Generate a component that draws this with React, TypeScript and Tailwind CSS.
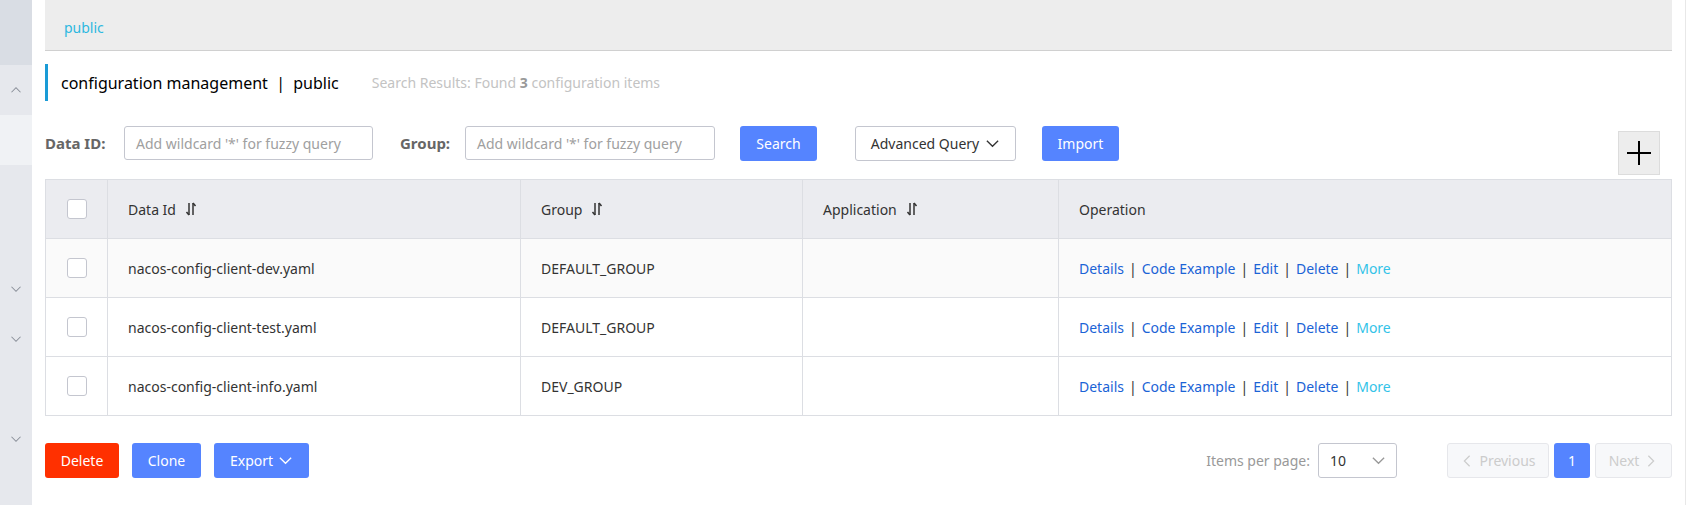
import React from 'react';

// 细箭头图标
function Chevron({ dir = 'down', className = '' }: { dir?: 'down' | 'up' | 'left' | 'right'; className?: string }) {
  const pts: Record<string, string> = {
    down: '2,5 8,11 14,5',
    up: '2,11 8,5 14,11',
    left: '11,2 5,8 11,14',
    right: '5,2 11,8 5,14',
  };
  return (
    <svg viewBox="0 0 16 16" className={className} fill="none" stroke="currentColor" strokeWidth="1.4">
      <polyline points={pts[dir]} />
    </svg>
  );
}

function SortIcon() {
  return (
    <svg viewBox="0 0 12 16" className="w-[12px] h-[16px] ml-[9px] text-[#333]" fill="none" stroke="currentColor" strokeWidth="1.5">
      <line x1="4" y1="2" x2="4" y2="14" />
      <polyline points="1.5,11 4,14" />
      <line x1="8" y1="2" x2="8" y2="14" />
      <polyline points="8,2 10.5,5" />
    </svg>
  );
}

const rows = [
  { id: 'nacos-config-client-dev.yaml', group: 'DEFAULT_GROUP' },
  { id: 'nacos-config-client-test.yaml', group: 'DEFAULT_GROUP' },
  { id: 'nacos-config-client-info.yaml', group: 'DEV_GROUP' },
];

function Checkbox() {
  return <div className="w-[20px] h-[20px] rounded-[3px] border border-[#c4c6cf] bg-white mx-auto" />;
}

function Sidebar() {
  return (
    <div className="w-[32px] shrink-0 flex flex-col text-[#8a8f99]">
      <div className="h-[65px] bg-[#d9dde4]" />
      <div className="h-[50px] bg-[#e6e8ed] flex items-center justify-center">
        <Chevron dir="up" className="w-[12px] h-[12px]" />
      </div>
      <div className="h-[50px] bg-[#f0f2f5]" />
      <div className="flex-1 bg-[#e6e8ed] flex flex-col items-center">
        <Chevron className="w-[12px] h-[12px] mt-[118px]" />
        <Chevron className="w-[12px] h-[12px] mt-[38px]" />
        <Chevron className="w-[12px] h-[12px] mt-[88px]" />
      </div>
    </div>
  );
}

export default function App() {
  const cell = 'border border-[#dcdee3] px-[20px] text-left font-normal';
  const sep = <span className="mx-[5px] text-[#333]">|</span>;
  return (
    <div
      className="flex w-[1686px] h-[505px] bg-white text-[14px] text-[#333] overflow-hidden"
      style={{ fontFamily: '"Noto Sans", "Liberation Sans", sans-serif' }}
    >
      <Sidebar />
      <div className="flex-1 pl-[13px] pr-[13px] border-r border-[#e8e8e8] flex flex-col">
        {/* 顶部命名空间 */}
        <div className="h-[51px] bg-[#ededed] border-b border-[#d0d0d0] pl-[19px] pt-[4px] flex items-center text-[#2eb8e0]">
          public
        </div>

        {/* 标题 */}
        <div className="mt-[13px] h-[37px] border-l-[3px] border-[#1a9bd6] pl-[13px] flex items-center">
          <span className="text-[16px] text-black">configuration management&nbsp; |&nbsp; public</span>
          <span className="ml-[33px] text-[#c3c3c3] text-[14px]">
            Search Results: Found <b className="text-[#999]">3</b> configuration items
          </span>
        </div>

        {/* 查询条件 */}
        <div className="mt-[25px] flex items-start">
          <div className="w-[79px] leading-[34px] text-[15px] font-bold text-[#666]">Data ID:</div>
          <div className="w-[249px] h-[34px] rounded-[3px] border border-[#c4c6cf] px-[11px] flex items-center text-[#a0a0a0]">
            Add wildcard '*' for fuzzy query
          </div>
          <div className="ml-[27px] w-[65px] leading-[34px] text-[15px] font-bold text-[#666]">Group:</div>
          <div className="w-[250px] h-[34px] rounded-[3px] border border-[#c4c6cf] px-[11px] flex items-center text-[#a0a0a0]">
            Add wildcard '*' for fuzzy query
          </div>
          <button className="ml-[25px] w-[77px] h-[35px] rounded-[3px] bg-[#5584ff] text-white">Search</button>
          <button className="ml-[38px] w-[161px] h-[35px] rounded-[3px] border border-[#c4c6cf] bg-white text-[#333] flex items-center justify-center gap-[6px]">
            Advanced Query
            <Chevron className="w-[15px] h-[15px]" />
          </button>
          <button className="ml-[26px] w-[77px] h-[35px] rounded-[3px] bg-[#5584ff] text-white">Import</button>
          <div className="ml-auto mr-[12px] mt-[5px] w-[42px] h-[44px] bg-[#ededed] border border-[#dcdcdc] flex items-center justify-center">
            <svg viewBox="0 0 26 26" className="w-[26px] h-[26px]" stroke="#000" strokeWidth="2">
              <line x1="13" y1="1" x2="13" y2="25" />
              <line x1="1" y1="13" x2="25" y2="13" />
            </svg>
          </div>
        </div>

        {/* 配置列表 */}
        <table className="mt-[4px] w-full border-collapse table-fixed">
          <colgroup>
            <col className="w-[62px]" />
            <col className="w-[413px]" />
            <col className="w-[282px]" />
            <col className="w-[256px]" />
            <col />
          </colgroup>
          <thead>
            <tr className="h-[59px] bg-[#ebecf0]">
              <th className="border border-[#dcdee3]"><Checkbox /></th>
              <th className={cell}><span className="inline-flex items-center">Data Id<SortIcon /></span></th>
              <th className={cell}><span className="inline-flex items-center">Group<SortIcon /></span></th>
              <th className={cell}><span className="inline-flex items-center">Application<SortIcon /></span></th>
              <th className={cell}>Operation</th>
            </tr>
          </thead>
          <tbody>
            {rows.map((r, i) => (
              <tr key={r.id} className={`h-[59px] ${i === 0 ? 'bg-[#fafafa]' : 'bg-white'}`}>
                <td className="border border-[#dcdee3]"><Checkbox /></td>
                <td className={cell}>{r.id}</td>
                <td className={cell}>{r.group}</td>
                <td className={cell}></td>
                <td className={cell}>
                  <span className="text-[#1b63d6]">Details</span>
                  {sep}
                  <span className="text-[#1b63d6]">Code Example</span>
                  {sep}
                  <span className="text-[#1b63d6]">Edit</span>
                  {sep}
                  <span className="text-[#1b63d6]">Delete</span>
                  {sep}
                  <span className="text-[#33c3e8]">More</span>
                </td>
              </tr>
            ))}
          </tbody>
        </table>

        {/* 批量操作与分页 */}
        <div className="mt-[27px] flex items-center">
          <button className="w-[74px] h-[35px] rounded-[3px] bg-[#ff3000] text-white">Delete</button>
          <button className="ml-[13px] w-[69px] h-[35px] rounded-[3px] bg-[#5584ff] text-white">Clone</button>
          <button className="ml-[13px] w-[95px] h-[35px] rounded-[3px] bg-[#5584ff] text-white flex items-center justify-center gap-[5px]">
            Export
            <Chevron className="w-[15px] h-[15px]" />
          </button>

          <span className="ml-auto text-[#999]">Items per page:</span>
          <div className="ml-[8px] w-[79px] h-[35px] rounded-[3px] border border-[#c4c6cf] flex items-center justify-between pl-[11px] pr-[10px] text-[#333]">
            10
            <Chevron className="w-[15px] h-[15px] text-[#999]" />
          </div>
          <button className="ml-[50px] w-[102px] h-[35px] rounded-[3px] border border-[#e6e7eb] bg-[#f7f8fa] text-[#ccc] flex items-center justify-center gap-[5px]">
            <Chevron dir="left" className="w-[14px] h-[14px]" />
            Previous
          </button>
          <button className="ml-[5px] w-[36px] h-[35px] rounded-[3px] bg-[#5584ff] text-white">1</button>
          <button className="ml-[5px] w-[77px] h-[35px] rounded-[3px] border border-[#e6e7eb] bg-[#f7f8fa] text-[#ccc] flex items-center justify-center gap-[5px]">
            Next
            <Chevron dir="right" className="w-[14px] h-[14px]" />
          </button>
        </div>
      </div>
    </div>
  );
}
